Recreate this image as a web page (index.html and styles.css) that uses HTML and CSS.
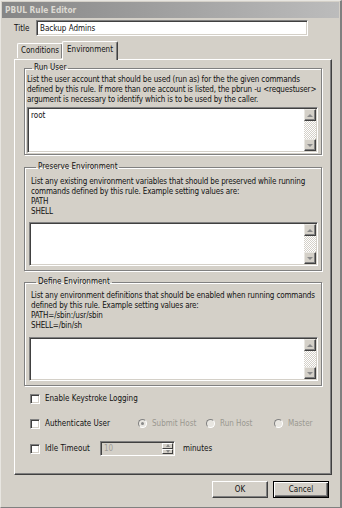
FILE: index.html
```html
<!DOCTYPE html>
<html lang="en">
<head>
  <meta charset="UTF-8" />
  <title>PBUL Rule Editor</title>
  <link rel="stylesheet" href="styles.css">
</head>
<body>
  <div class="window">
    <div class="titlebar">PBUL Rule Editor</div>

    <div class="content">
      <div class="title-row">
        <label class="title-label">Title</label>
        <div class="field title-field">Backup Admins</div>
      </div>

      <div class="tabstrip">
        <div class="tab">Conditions</div>
        <div class="tab active">Environment</div>
      </div>

      <div class="panel">
        <fieldset class="group g-run">
          <legend>Run User</legend>
          <p class="desc">List the user account that should be used (run as) for the the given commands<br>defined by this rule. If more than one account is listed, the pbrun -u &lt;requestuser&gt;<br>argument is necessary to identify which is to be used by the caller.</p>
          <div class="textbox">
            <div class="textbox-text">root</div>
            <div class="scrollbar">
              <div class="sb-btn"><span class="arrow up"></span></div>
              <div class="sb-track"></div>
              <div class="sb-btn"><span class="arrow down"></span></div>
            </div>
          </div>
        </fieldset>

        <fieldset class="group g-preserve">
          <legend>Preserve Environment</legend>
          <p class="desc">List any existing environment variables that should be preserved while running<br>commands defined by this rule. Example setting values are:<br>PATH<br>SHELL</p>
          <div class="textbox">
            <div class="textbox-text"></div>
            <div class="scrollbar">
              <div class="sb-btn"><span class="arrow up"></span></div>
              <div class="sb-track"></div>
              <div class="sb-btn"><span class="arrow down"></span></div>
            </div>
          </div>
        </fieldset>

        <fieldset class="group g-define">
          <legend>Define Environment</legend>
          <p class="desc">List any environment definitions that should be enabled when running commands<br>defined by this rule. Example setting values are:<br>PATH=/sbin:/usr/sbin<br>SHELL=/bin/sh</p>
          <div class="textbox">
            <div class="textbox-text"></div>
            <div class="scrollbar">
              <div class="sb-btn"><span class="arrow up"></span></div>
              <div class="sb-track"></div>
              <div class="sb-btn"><span class="arrow down"></span></div>
            </div>
          </div>
        </fieldset>

        <div class="options">
          <div class="opt-row">
            <span class="check"></span><span class="opt-label">Enable Keystroke Logging</span>
          </div>
          <div class="opt-row">
            <span class="check"></span><span class="opt-label auth-label">Authenticate User</span>
            <span class="radio checked"></span><span class="radio-label w-submit">Submit Host</span>
            <span class="radio"></span><span class="radio-label w-run">Run Host</span>
            <span class="radio"></span><span class="radio-label">Master</span>
          </div>
          <div class="opt-row">
            <span class="check"></span><span class="opt-label idle-label">Idle Timeout</span>
            <div class="spinner">
              <div class="spin-text">10</div>
              <div class="spin-btns">
                <div class="spin-btn"><span class="arrow up small"></span></div>
                <div class="spin-btn"><span class="arrow down small"></span></div>
              </div>
            </div>
            <span class="minutes">minutes</span>
          </div>
        </div>
      </div>

      <div class="buttons">
        <button class="btn">OK</button>
        <button class="btn default">Cancel</button>
      </div>
    </div>
  </div>
</body>
</html>
```

FILE: styles.css
```css
* {
  box-sizing: border-box;
}

body {
  margin: 0;
  background: #d4d0c8;
  font-family: "DejaVu Sans Condensed", "Liberation Sans", Arial, sans-serif;
  font-size: 8px;
  color: #111;
}

.window {
  width: 342px;
  height: 508px;
  background: #d4d0c8;
  border-top: 1px solid #e8e6e1;
  border-left: 1px solid #e8e6e1;
  border-right: 2px solid #808080;
  border-bottom: 1px solid #808080;
}

.titlebar {
  height: 16px;
  margin: 1px 1px 0 1px;
  padding-left: 3px;
  line-height: 16px;
  background: linear-gradient(to right, #868686, #bcbcbc);
  color: #dcd9d2;
  font-weight: bold;
  font-size: 8.3px;
}

.content {
  padding: 2px 0 0 13px;
}

/* title */
.title-row {
  display: flex;
  align-items: center;
  height: 16px;
}

.title-label {
  width: 22px;
}

.field {
  height: 16px;
  background: #fff;
  border-top: 1px solid #808080;
  border-left: 1px solid #808080;
  border-right: 1px solid #fff;
  border-bottom: 1px solid #fff;
  box-shadow: inset 1px 1px 0 #404040, inset -1px -1px 0 #d4d0c8;
  padding: 2px 3px;
  line-height: 11px;
}

.title-field {
  width: 272px;
}

/* tabs */
.tabstrip {
  display: flex;
  align-items: flex-end;
  height: 19px;
  margin-top: 4px;
  padding-left: 3px;
  position: relative;
  z-index: 1;
}

.tab {
  height: 15px;
  width: 46px;
  text-align: center;
  line-height: 13px;
  border-top: 1px solid #fff;
  border-left: 1px solid #fff;
  border-right: 1px solid #404040;
  box-shadow: inset -1px 0 0 #808080;
  border-radius: 2px 2px 0 0;
  background: #d4d0c8;
  margin-bottom: 1px;
}

.tab.active {
  height: 19px;
  width: 56px;
  margin-bottom: -1px;
  margin-left: -1px;
  line-height: 15px;
}

.panel {
  width: 318px;
  height: 416px;
  padding: 3px 9px 0 9px;
  border-top: 1px solid #fff;
  border-left: 1px solid #fff;
  border-right: 1px solid #404040;
  border-bottom: 1px solid #404040;
  box-shadow: inset -1px -1px 0 #808080;
}

/* groups */
.group {
  margin: 0;
  padding: 0 3px 2px 6px;
  border: 1px solid #808080;
  box-shadow: 1px 1px 0 #fff, inset 1px 1px 0 #fff;
  min-width: 0;
}

.group legend {
  padding: 0 2px;
  margin-left: 5px;
  line-height: 10px;
}

.g-run {
  height: 92px;
  padding-left: 2px;
}

.g-preserve {
  height: 109px;
  margin-top: 7px;
}

.g-define {
  height: 109px;
  margin-top: 6px;
}

.desc {
  margin: 2px 0 0 0;
  line-height: 10px;
  letter-spacing: -0.15px;
  white-space: nowrap;
}

.g-preserve .desc {
  margin-top: 5px;
}

.g-define .desc {
  margin-top: 4px;
}

.textbox {
  display: flex;
  height: 46px;
  margin-top: 2px;
  background: #fff;
  border-top: 1px solid #808080;
  border-left: 1px solid #808080;
  border-right: 1px solid #fff;
  border-bottom: 1px solid #fff;
  box-shadow: inset 1px 1px 0 #404040, inset -1px -1px 0 #d4d0c8;
  padding: 1px;
}

.g-preserve .textbox {
  height: 44px;
  margin-top: 5px;
  margin-left: -2px;
}

.g-define .textbox {
  height: 44px;
  margin-top: 6px;
  margin-left: -2px;
}

.textbox-text {
  flex: 1;
  padding: 2px;
  line-height: 10px;
}

.scrollbar {
  width: 12px;
  display: flex;
  flex-direction: column;
}

.sb-track {
  flex: 1;
  background: repeating-conic-gradient(#fff 0 25%, #d4d0c8 0 50%) 0 0 / 2px 2px;
}

.sb-btn {
  height: 12px;
  background: #d4d0c8;
  border-top: 1px solid #e8e6e1;
  border-left: 1px solid #e8e6e1;
  border-right: 1px solid #404040;
  border-bottom: 1px solid #404040;
  box-shadow: inset -1px -1px 0 #808080;
  display: flex;
  align-items: center;
  justify-content: center;
}

.arrow {
  width: 0;
  height: 0;
  border-left: 3px solid transparent;
  border-right: 3px solid transparent;
}

.arrow.up {
  border-bottom: 3px solid #8a8a8a;
}

.arrow.down {
  border-top: 3px solid #8a8a8a;
}

.arrow.small {
  border-left-width: 2px;
  border-right-width: 2px;
}

/* options */
.options {
  padding: 0 0 0 6px;
}

.opt-row {
  display: flex;
  align-items: center;
  height: 25px;
}

.check {
  width: 10px;
  height: 10px;
  flex-shrink: 0;
  background: #fff;
  border-top: 1px solid #808080;
  border-left: 1px solid #808080;
  border-right: 1px solid #fff;
  border-bottom: 1px solid #fff;
  box-shadow: inset 1px 1px 0 #404040, inset -1px -1px 0 #d4d0c8;
  margin-right: 5px;
}

.auth-label {
  width: 93px;
}

.radio {
  width: 9px;
  height: 9px;
  flex-shrink: 0;
  border-radius: 50%;
  background: #e8e6e1;
  border: 1px solid;
  border-color: #808080 #fff #fff #808080;
  margin-right: 5px;
  display: flex;
  align-items: center;
  justify-content: center;
}

.radio.checked::after {
  content: "";
  width: 3px;
  height: 3px;
  border-radius: 50%;
  background: #8a8a8a;
}

.radio-label {
  color: #9a9890;
}

.w-submit {
  width: 54px;
}

.w-run {
  width: 54px;
}

.idle-label {
  width: 55px;
}

.spinner {
  display: flex;
  width: 75px;
  height: 15px;
  border-top: 1px solid #808080;
  border-left: 1px solid #808080;
  border-right: 1px solid #fff;
  border-bottom: 1px solid #fff;
  box-shadow: inset 1px 1px 0 #404040, inset -1px -1px 0 #d4d0c8;
  padding: 1px;
}

.spin-text {
  flex: 1;
  color: #a09e98;
  padding-left: 2px;
  line-height: 11px;
}

.spin-btns {
  width: 11px;
  display: flex;
  flex-direction: column;
}

.spin-btn {
  flex: 1;
  border-top: 1px solid #fff;
  border-left: 1px solid #fff;
  border-right: 1px solid #404040;
  border-bottom: 1px solid #404040;
  display: flex;
  align-items: center;
  justify-content: center;
}

.minutes {
  margin-left: 8px;
}

/* buttons */
.buttons {
  display: flex;
  justify-content: flex-end;
  gap: 5px;
  margin-top: 6px;
  width: 315px;
}

.btn {
  width: 56px;
  height: 17px;
  padding: 0;
  font-family: "DejaVu Sans Condensed", "Liberation Sans", Arial, sans-serif;
  font-size: 8px;
  color: #111;
  background: #d4d0c8;
  border-top: 1px solid #fff;
  border-left: 1px solid #fff;
  border-right: 1px solid #404040;
  border-bottom: 1px solid #404040;
  box-shadow: inset -1px -1px 0 #808080;
}

.btn.default {
  border: 1px solid #000;
  box-shadow: inset 1px 1px 0 #fff, inset -1px -1px 0 #404040, inset -2px -2px 0 #808080;
}
```
